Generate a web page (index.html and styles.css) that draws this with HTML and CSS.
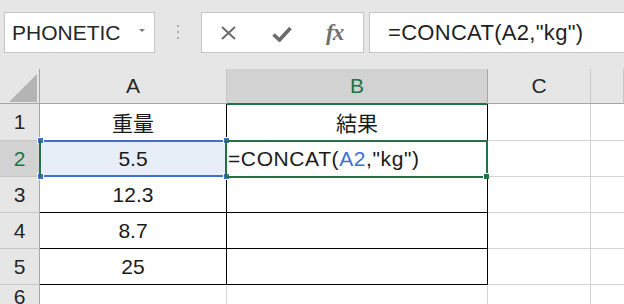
FILE: index.html
```html
<!DOCTYPE html>
<html>
<head>
    <meta charset="utf-8">
    <title>Sheet</title>
    <link rel="stylesheet" href="styles.css">
</head>
<body>
    <!-- 数式バー -->
    <div class="formula-row">
        <div class="name-box">PHONETIC<span class="caret"></span></div>
        <div class="grip"><i></i><i></i><i></i></div>
        <div class="fx-buttons">
            <svg class="ico-cancel" width="17" height="16" viewBox="0 0 17 16">
                <path d="M2 2 L15 14 M15 2 L2 14" stroke="#6b6b6b" stroke-width="2" fill="none"/>
            </svg>
            <svg class="ico-enter" width="20" height="16" viewBox="0 0 20 16">
                <path d="M1.5 8.5 L7.5 14 L18.5 2" stroke="#6b6b6b" stroke-width="3.6" fill="none"/>
            </svg>
            <span class="fx">fx</span>
        </div>
        <div class="formula-bar">=CONCAT(A2,"kg")</div>
    </div>

    <!-- シート -->
    <div class="sheet">
        <div class="corner"><span class="tri"></span></div>
        <div class="col-head">A</div>
        <div class="col-head active">B</div>
        <div class="col-head">C</div>
        <div class="col-head last"></div>

        <div class="row-head">1</div>
        <div class="cell tb">重量</div>
        <div class="cell tb">結果</div>
        <div class="cell"></div>
        <div class="cell last"></div>

        <div class="row-head active">2</div>
        <div class="cell tb ref">5.5
            <div class="ref-box">
                <span class="h tl"></span><span class="h tr"></span>
                <span class="h bl"></span><span class="h br"></span>
            </div>
        </div>
        <div class="cell tb edit">=CONCAT(<span class="ref-txt">A2</span>,"kg")
            <div class="active-box"><span class="fill"></span></div>
        </div>
        <div class="cell"></div>
        <div class="cell last"></div>

        <div class="row-head">3</div>
        <div class="cell tb">12.3</div>
        <div class="cell tb"></div>
        <div class="cell"></div>
        <div class="cell last"></div>

        <div class="row-head">4</div>
        <div class="cell tb">8.7</div>
        <div class="cell tb"></div>
        <div class="cell"></div>
        <div class="cell last"></div>

        <div class="row-head">5</div>
        <div class="cell tb">25</div>
        <div class="cell tb"></div>
        <div class="cell"></div>
        <div class="cell last"></div>

        <div class="row-head">6</div>
        <div class="cell"></div>
        <div class="cell"></div>
        <div class="cell"></div>
        <div class="cell last"></div>
    </div>
</body>
</html>
```

FILE: styles.css
```css
html
{
    font-family: "Liberation Sans", "Noto Sans CJK JP", sans-serif;
}

body
{
    margin: 0;
    width: 624px;
    height: 304px;
    overflow: hidden;
    background-color: #ffffff;
    color: #1f1f1f;
}

/* formula bar */
.formula-row
{
    display: flex;
    align-items: flex-start;
    height: 69px;
    box-sizing: border-box;
    padding: 12px 0 0 4px;
    background-color: #e6e6e6;
}

.name-box
{
    display: flex;
    align-items: center;
    width: 151px;
    height: 41px;
    box-sizing: border-box;
    padding-left: 7px;
    border: 1px solid #c6c6c6;
    background-color: #ffffff;
    font-size: 21px;
    color: #262626;
}

.caret
{
    margin-left: auto;
    margin-right: 9px;
    width: 0;
    height: 0;
    border-left: 3px solid transparent;
    border-right: 3px solid transparent;
    border-top: 3px solid #7a7a7a;
    margin-top: -4px;
}

.grip
{
    display: flex;
    flex-direction: column;
    gap: 4px;
    margin: 13px 0 0 22px;
}

.grip i
{
    display: block;
    width: 2px;
    height: 2px;
    background-color: #a8a8a8;
}

.fx-buttons
{
    display: flex;
    align-items: center;
    width: 163px;
    height: 41px;
    box-sizing: border-box;
    margin-left: 22px;
    border: 1px solid #c6c6c6;
    background-color: #ffffff;
}

.ico-cancel
{
    margin-left: 18px;
}

.ico-enter
{
    margin-left: 35px;
    margin-top: 2px;
}

.fx
{
    margin-left: 34px;
    font-family: "Liberation Serif", serif;
    font-style: italic;
    font-weight: bold;
    font-size: 23px;
    color: #707070;
    letter-spacing: -1px;
}

.formula-bar
{
    flex: 1;
    display: flex;
    align-items: center;
    height: 41px;
    box-sizing: border-box;
    margin-left: 5px;
    padding-left: 18px;
    border: 1px solid #c6c6c6;
    border-right: none;
    background-color: #ffffff;
    font-size: 22px;
    letter-spacing: 0.3px;
    color: #1f1f1f;
}

/* grid */
.sheet
{
    display: grid;
    grid-template-columns: 40px 187px 261px 103px 1fr;
    grid-template-rows: 35px 37px 36px 36px 36px 36px;
}

.sheet > div
{
    box-sizing: border-box;
    display: flex;
    align-items: center;
    justify-content: center;
    font-size: 21px;
    position: relative;
}

.corner
{
    background-color: #e6e6e6;
    border-right: 1px solid #a6a6a6;
    border-bottom: 1px solid #a6a6a6;
    align-items: flex-end !important;
    justify-content: flex-end !important;
    padding: 0 2px 1px 0;
}

.tri
{
    width: 28px;
    height: 28px;
    background-color: #b4b4b4;
    clip-path: polygon(100% 0, 100% 100%, 0 100%);
}

.col-head
{
    background-color: #e6e6e6;
    border-right: 1px solid #c6c6c6;
    border-bottom: 1px solid #a6a6a6;
    color: #262626;
}

.col-head.active
{
    background-color: #d2d2d2;
    color: #217346;
    border-right-color: #a6a6a6;
}

.col-head.active::after
{
    content: "";
    position: absolute;
    left: 0;
    right: 0;
    bottom: -2px;
    height: 2px;
    background-color: #217346;
    z-index: 2;
}

.row-head
{
    background-color: #e6e6e6;
    border-right: 1px solid #a6a6a6;
    border-bottom: 1px solid #c6c6c6;
    color: #262626;
}

.row-head.active
{
    background-color: #d2d2d2;
    color: #217346;
}

.row-head.active::after
{
    content: "";
    position: absolute;
    top: -1px;
    bottom: -1px;
    right: -2px;
    width: 2px;
    background-color: #217346;
    z-index: 3;
}

.cell
{
    border-right: 1px solid #d4d4d4;
    border-bottom: 1px solid #d4d4d4;
    color: #1a1a1a;
}

.cell.tb
{
    border-right-color: #000000;
    border-bottom-color: #000000;
}

.cell.last
{
    border-right: none;
}

/* reference range A2 */
.cell.ref
{
    background-color: #e8eef8;
}

.ref-box
{
    position: absolute;
    top: -1px;
    left: -1px;
    right: -1px;
    bottom: -1px;
    border-top: 2px solid #3d70cf;
    border-bottom: 2px solid #3d70cf;
    z-index: 2;
}

.h
{
    position: absolute;
    width: 5px;
    height: 5px;
    background-color: #3d70cf;
    box-shadow: 0 0 0 1px #ffffff;
    z-index: 4;
}

.h.tl { left: -1px; top: -4px; }
.h.tr { right: -2px; top: -4px; }
.h.bl { left: -1px; bottom: -4px; }
.h.br { right: -2px; bottom: -4px; }

/* active cell B2 */
.cell.edit
{
    justify-content: flex-start;
    padding-left: 1px;
    letter-spacing: 0.6px;
}

.ref-txt
{
    color: #3d70cf;
}

.active-box
{
    position: absolute;
    top: -1px;
    left: -2px;
    right: -1px;
    bottom: -2px;
    border: 2px solid #217346;
    z-index: 3;
}

.fill
{
    position: absolute;
    right: -3px;
    bottom: -3px;
    width: 5px;
    height: 5px;
    background-color: #217346;
    box-shadow: -1px -1px 0 #ffffff;
}
```
